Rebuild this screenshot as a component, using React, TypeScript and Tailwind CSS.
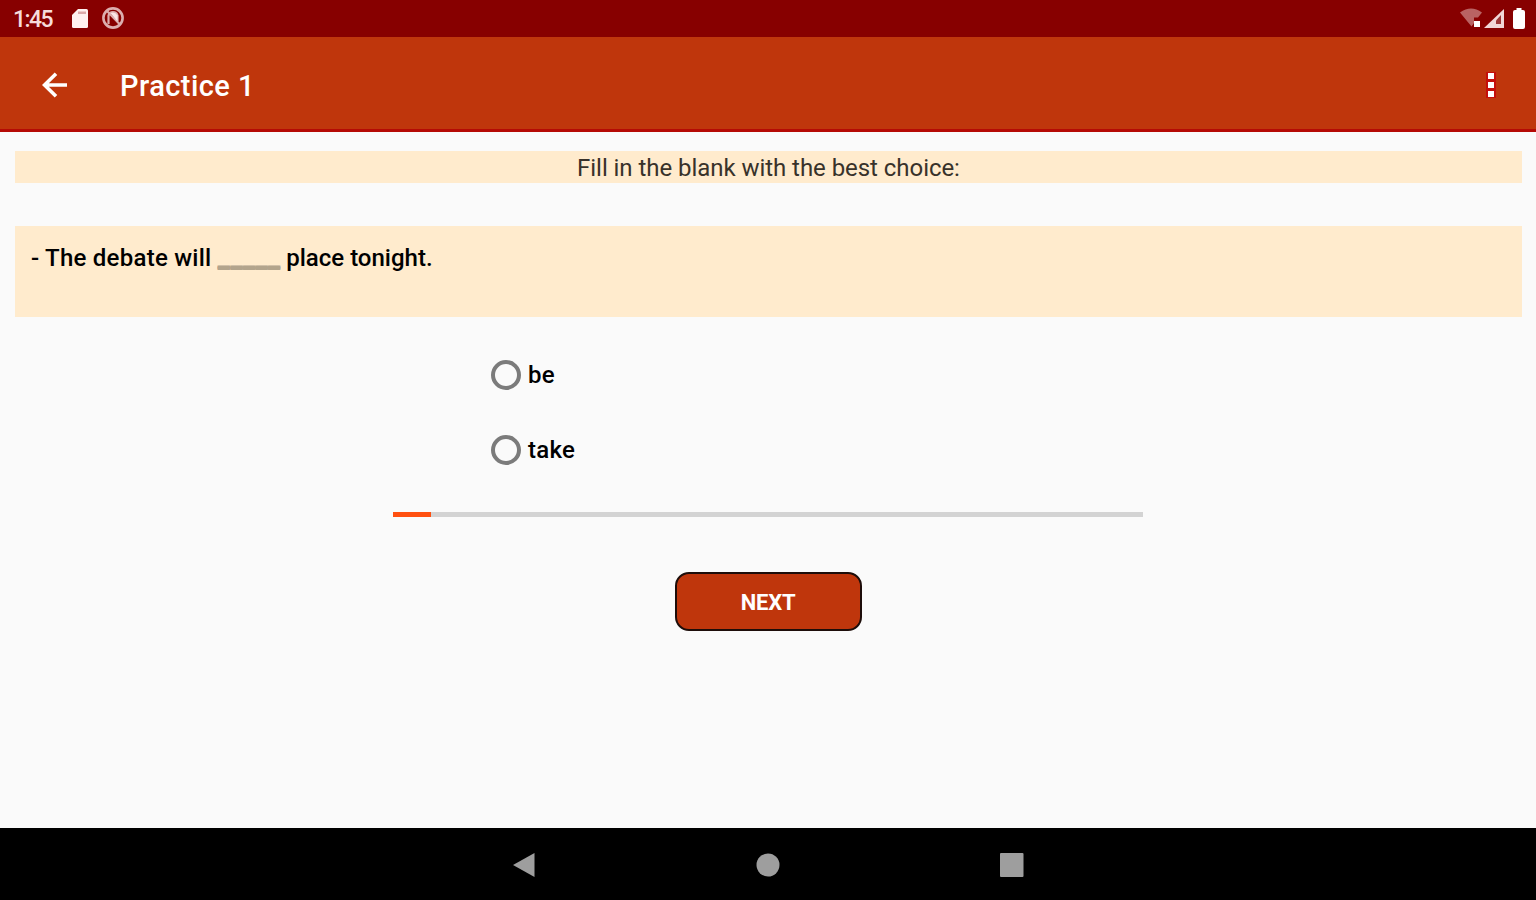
import { useState } from 'react'

interface ChoiceProps {
  label: string
  selected: boolean
  onSelect: () => void
}

const choices = ['be', 'take']
const progress = 5

function StatusBar() {
  return (
    <div className="flex h-[37px] items-center justify-between bg-[#870000] pr-[11px] pb-px pl-[13px] text-[#f6dcdc]">
      <div className="flex items-center">
        <span className="w-[59px] pt-[2px] text-[23px] leading-none font-medium tracking-[-1.6px]">1:45</span>
        <svg className="h-[19px] w-4" viewBox="0 0 16 19" fill="#fff1f0">
          <path d="M6 0h8.500Q16 0 16 1.500V17.500Q16 19 14.500 19H1.500Q0 19 0 17.500V6z" />
          <path d="M6 2.500h8v2.500H6z" fill="#dcaaaa" />
        </svg>
        <svg className="ml-[13px] size-6" viewBox="0 0 24 24" fill="none" stroke="#dcaeae">
          <circle cx="12" cy="12" r="9.600" strokeWidth="2.600" />
          <path d="M7.500 18V9.500a4.700 4.700 0 0 1 9 0V15M6 5l12.500 13" strokeWidth="2.200" />
          <path d="M9.500 7l7 8.500V9.500Q14 5.500 9.500 7z" fill="#fbe6e6" stroke="none" />
        </svg>
      </div>
      <div className="flex items-center">
        <svg className="h-[20px] w-[22px]" viewBox="0 0 22 20">
          <path d="M0 4.500Q11-3.500 22 4.500L18 9.500H14V15L11.500 18.500z" fill="#b96363" />
          <rect x="14" y="13" width="6" height="6" fill="#fff" />
        </svg>
        <svg className="ml-[2px] h-[19px] w-5" viewBox="0 0 20 19">
          <path d="M0 19L20 0v19z" fill="#f1d6d6" />
          <path d="M12 15V11.500L17 6v9z" fill="#9c3535" />
        </svg>
        <svg className="ml-[9px] h-[21px] w-3" viewBox="0 0 12 21" fill="#fff">
          <path d="M3.500 0h5v2H10q2 0 2 2v15q0 2-2 2H2q-2 0-2-2V4q0-2 2-2h1.500z" />
        </svg>
      </div>
    </div>
  )
}

function AppBar() {
  return (
    <header className="flex h-[95px] items-center border-b-[3px] border-[#b50a05] bg-[#bf360c] pt-[3px] pr-10 pl-[42px] text-white">
      <button aria-label="Back">
        <svg className="h-[26px] w-[26px]" viewBox="0 0 26 26" fill="none" stroke="currentColor" strokeWidth="3.600">
          <path d="M14 1.700L2.500 13L14 24.300M2.500 13h22.500" />
        </svg>
      </button>
      <h1 className="ml-[52px] grow pt-[3px] text-[29px] leading-none font-medium tracking-[0.45px]">Practice 1</h1>
      <button aria-label="More options">
        <svg className="h-[28px] w-[10px]" viewBox="0 0 10 28">
          <path d="M0 1h10v26H0z" fill="#c40f0a" />
          <path d="M2 2h6v6H2zM2 11h6v6H2zM2 20h6v6H2z" fill="#fff" />
        </svg>
      </button>
    </header>
  )
}

function Choice({ label, selected, onSelect }: ChoiceProps) {
  return (
    <button
      role="radio"
      aria-checked={selected}
      onClick={onSelect}
      className="flex h-[75px] items-center gap-[7px]"
    >
      <span className="flex size-[30px] items-center justify-center rounded-full border-4 border-[#7b7b7b]">
        {selected && <span className="size-3.5 rounded-full bg-[#ff5722]" />}
      </span>
      <span className="text-2xl font-medium tracking-[0.3px] text-black">{label}</span>
    </button>
  )
}

function NavBar() {
  return (
    <nav className="flex h-[72px] items-center justify-center gap-[220px] bg-black pt-px">
      <svg className="size-6" viewBox="0 0 24 24" fill="#9e9e9e">
        <path d="M1 12L22.500 0v24z" />
      </svg>
      <svg className="size-6" viewBox="0 0 24 24" fill="#9e9e9e">
        <circle cx="12" cy="12" r="11.500" />
      </svg>
      <svg className="size-6" viewBox="0 0 24 24" fill="#9e9e9e">
        <rect width="23.500" height="24" rx="1" />
      </svg>
    </nav>
  )
}

export default function App() {
  const [answer, setAnswer] = useState<string | null>(null)

  return (
    <div className="flex h-screen flex-col bg-[#fafafa] font-['Roboto','Liberation_Sans',sans-serif]">
      <StatusBar />
      <AppBar />
      <main className="flex grow flex-col pt-[19px] pr-[14px] pl-[15px]">
        <p className="h-8 bg-[#ffebcd] text-center text-2xl leading-[34px] tracking-[-0.05px] text-[#38322a]">
          Fill in the blank with the best choice:
        </p>
        <div className="mt-[43px] h-[91px] bg-[#ffebcd] px-4 pt-4 text-2xl font-medium text-black">
          <span className="tracking-[0.25px]">- The debate will </span>
          <span className="text-[28px] leading-none text-[#b3a48c] text-shadow-[0_1px_0_#b3a48c,0_-1px_0_#b3a48c]">_____</span> place tonight.
        </div>
        <div className="mt-5 ml-[476px] flex flex-col items-start" role="radiogroup">
          {choices.map((choice) => (
            <Choice
              key={choice}
              label={choice}
              selected={answer === choice}
              onSelect={() => setAnswer(choice)}
            />
          ))}
        </div>
        <div className="mt-[25px] ml-[378px] h-[5px] w-[750px] bg-[#d3d3d3]">
          <div className="h-full bg-[#ff5010]" style={{ width: `${progress}%` }} />
        </div>
        <button className="mt-[55px] mr-px h-[59px] w-[187px] self-center rounded-[14px] border-2 border-[#1d0d0a] bg-[#bf360c] pt-px text-[22px] font-bold tracking-[-0.2px] text-white">
          NEXT
        </button>
      </main>
      <NavBar />
    </div>
  )
}
